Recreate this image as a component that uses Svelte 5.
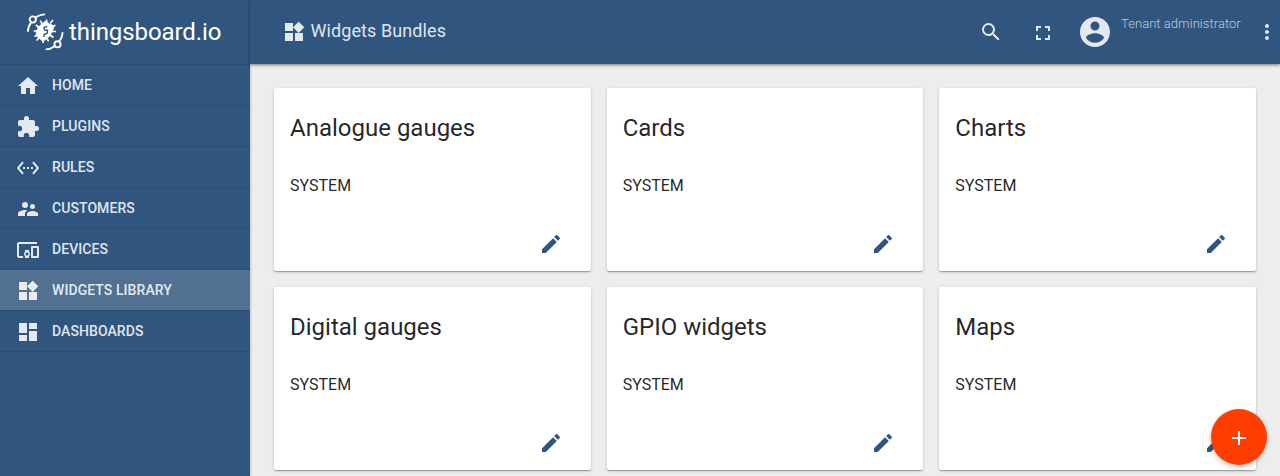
<script>
  const icons = {
    home: 'M10 20v-6h4v6h5v-8h3L12 3 2 12h3v8z',
    extension: 'M20.5 11H19V7c0-1.1-.9-2-2-2h-4V3.500a2.500 2.500 0 0 0-5 0V5H4c-1.100 0-1.990.9-1.990 2v3.800H3.500c1.490 0 2.700 1.210 2.700 2.700s-1.210 2.700-2.700 2.700H2V20c0 1.100.9 2 2 2h3.800v-1.500c0-1.490 1.210-2.700 2.700-2.700s2.700 1.210 2.700 2.700V22H17c1.100 0 2-.9 2-2v-4h1.500a2.500 2.500 0 0 0 0-5z',
    rules: 'M7.770 6.760L6.230 5.480.820 12l5.410 6.520 1.540-1.280L3.420 12l4.350-5.240zM7 13h2v-2H7v2zm10-2h-2v2h2v-2zm-6 2h2v-2h-2v2zm6.770-7.520l-1.540 1.280L20.580 12l-4.350 5.240 1.540 1.280L23.180 12l-5.410-6.520z',
    people: 'M16.500 12a2.500 2.500 0 1 0 0-5 2.500 2.500 0 0 0 0 5zM9 11a3 3 0 1 0 0-6 3 3 0 0 0 0 6zm7.500 3c-1.830 0-5.500.92-5.500 2.750V19h11v-2.250c0-1.830-3.670-2.750-5.500-2.750zM9 13c-2.330 0-7 1.170-7 3.500V19h7v-2.250c0-.85.33-2.340 2.370-3.470C10.500 13.100 9.660 13 9 13z',
    devices: 'M3 6h18V4H3c-1.100 0-2 .9-2 2v12c0 1.100.9 2 2 2h4v-2H3V6zm10 6H9v1.780c-.61.55-1 1.330-1 2.220s.39 1.670 1 2.220V20h4v-1.780c.61-.55 1-1.340 1-2.220s-.39-1.670-1-2.220V12zm-2 5.500a1.500 1.500 0 1 1 0-3 1.500 1.500 0 0 1 0 3zM22 8h-6c-.5 0-1 .5-1 1v10c0 .5.5 1 1 1h6c.5 0 1-.5 1-1V9c0-.5-.5-1-1-1zm-1 10h-4v-8h4v8z',
    widgets: 'M13 13v8h8v-8h-8zM3 21h8v-8H3v8zM3 3v8h8V3H3zm13.660-1.310L11 7.340 16.660 13l5.660-5.660-5.660-5.650z',
    dashboard: 'M3 13h8V3H3v10zm0 8h8v-6H3v6zm10 0h8V11h-8v10zm0-18v6h8V3h-8z',
    search: 'M15.500 14h-.79l-.28-.27A6.471 6.471 0 0 0 16 9.500 6.500 6.500 0 1 0 9.500 16c1.610 0 3.090-.59 4.230-1.570l.27.28v.79l5 4.990L20.490 19l-4.990-5zm-6 0C7.010 14 5 11.990 5 9.500S7.010 5 9.500 5 14 7.010 14 9.500 11.990 14 9.500 14z',
    fullscreen: 'M7 14H5v5h5v-2H7v-3zm-2-4h2V7h3V5H5v5zm12 7h-3v2h5v-5h-2v3zM14 5v2h3v3h2V5h-5z',
    account: 'M12 2C6.480 2 2 6.480 2 12s4.480 10 10 10 10-4.480 10-10S17.520 2 12 2zm0 3c1.660 0 3 1.340 3 3s-1.340 3-3 3-3-1.340-3-3 1.340-3 3-3zm0 14.200c-2.500 0-4.710-1.280-6-3.220.03-1.990 4-3.080 6-3.080 1.990 0 5.970 1.090 6 3.080-1.290 1.940-3.500 3.220-6 3.220z',
    more: 'M12 8c1.100 0 2-.9 2-2s-.9-2-2-2-2 .9-2 2 .9 2 2 2zm0 2c-1.100 0-2 .9-2 2s.9 2 2 2 2-.9 2-2-.9-2-2-2zm0 6c-1.100 0-2 .9-2 2s.9 2 2 2 2-.9 2-2-.9-2-2-2z',
    edit: 'M3 17.250V21h3.750L17.810 9.940l-3.750-3.750L3 17.250zM20.710 7.040a.996.996 0 0 0 0-1.410l-2.340-2.340a.996.996 0 0 0-1.410 0l-1.830 1.830 3.750 3.750 1.830-1.830z',
    add: 'M19 13h-6v6h-2v-6H5v-2h6V5h2v6h6v2z'
  };

  const menu = [
    { label: 'Home', icon: 'home' },
    { label: 'Plugins', icon: 'extension' },
    { label: 'Rules', icon: 'rules' },
    { label: 'Customers', icon: 'people' },
    { label: 'Devices', icon: 'devices' },
    { label: 'Widgets Library', icon: 'widgets', active: true },
    { label: 'Dashboards', icon: 'dashboard' }
  ];

  const bundles = ['Analogue gauges', 'Cards', 'Charts', 'Digital gauges', 'GPIO widgets', 'Maps'];
</script>

{#snippet icon(name, size = 24)}
  <svg class="icon" width={size} height={size} viewBox="0 0 24 24"><path d={icons[name]} /></svg>
{/snippet}

<div class="app">
  <aside>
    <div class="brand">
      <svg class="logo" width="40" height="40" viewBox="0 0 40 40">
        <g fill="none" stroke="#fff" stroke-width="1.900">
          <circle cx="7.800" cy="7.500" r="3.100" />
          <circle cx="32.500" cy="32.300" r="3.100" />
          <path d="M6.300 10.300C4 13 3 16 2.800 19.700M10.600 5.600C13.500 3.300 16.500 2.500 20 2.400" />
          <path d="M33.900 29.400C36.300 27 37.500 24 37.500 20.300M29.600 34.200C26.500 36.500 24 37.400 20.700 37.400" />
          <path stroke-width="1.600" d="M17 12L15.300 8.500M21.500 10.500V7.500M25 11.500L28 8M27 15L30.500 13.300M27 19.500H31M25 23L28.500 25.500M22 26L23.500 29.500M18 27V31M15 25L11.500 28.500M13 22.500L9.500 24.500M12.500 19H8.700M14 15.500L10.800 13" />
        </g>
        <path fill="#fff" stroke="#fff" stroke-width="0.800" stroke-linejoin="round" d="M21.300 9L24.500 12.200 28 13.200 28.700 15.500 27.300 19.200 25 23.500 21 27.500 17.500 29 14.500 26.500 11.700 24.300 11.200 20 13.200 15.500 17.300 11.200z" />
        <path fill="none" stroke="#305680" stroke-width="1.400" d="M22.300 14.300L19 15.500 19.500 18 22.500 18.200 22.200 21.300 19 22.500 19 25" />
      </svg>
      <span>thingsboard.io</span>
    </div>
    <nav>
      {#each menu as item}
        <div class="item" class:active={item.active}>
          {@render icon(item.icon)}
          <span>{item.label}</span>
        </div>
      {/each}
    </nav>
  </aside>

  <section>
    <header>
      {@render icon('widgets')}
      <h1>Widgets Bundles</h1>
      <div class="tools">
        <span class="search">{@render icon('search')}</span>
        <span class="full">{@render icon('fullscreen')}</span>
        <span class="avatar">{@render icon('account', 36)}</span>
        <span class="user">Tenant administrator</span>
        <span class="more">{@render icon('more')}</span>
      </div>
    </header>
    <main>
      {#each bundles as name}
        <article>
          <h2>{name}</h2>
          <p>SYSTEM</p>
          <footer>{@render icon('edit')}</footer>
        </article>
      {/each}
    </main>
  </section>

  <button class="fab" aria-label="Add">{@render icon('add')}</button>
</div>

<style>
  :global(body) { margin: 0; overflow: hidden; }
  .app {
    display: flex;
    position: relative;
    width: 1280px;
    height: 476px;
    overflow: hidden;
    background: #ededed;
    color: rgba(0, 0, 0, 0.87);
    font-family: Roboto, sans-serif;
  }
  .icon { display: block; flex: none; fill: currentColor; }
  aside {
    width: 250px;
    flex: none;
    background: #305680;
    color: rgba(255, 255, 255, 0.87);
    box-shadow: 0 1px 3px rgba(0, 0, 0, 0.3);
  }
  .brand { display: flex; height: 64px; box-sizing: border-box; padding: 12px 0 0 25px; color: #fff; }
  .brand span { margin: 5px 0 0 4px; font-size: 24px; line-height: 30px; letter-spacing: -0.080px; }
  .logo { flex: none; }
  nav { border-bottom: 1px solid #2a4c71; }
  .item {
    display: flex;
    align-items: center;
    height: 41px;
    box-sizing: border-box;
    padding: 2px 16px 0;
    border-top: 1px solid #2a4c71;
    text-transform: uppercase;
    font-size: 14px;
    font-weight: 500;
    letter-spacing: 0.070px;
  }
  .item span { margin: -2px 0 0 12px; }
  .active { background: #517092; }
  section { flex: 1; min-width: 0; }
  header {
    display: flex;
    height: 64px;
    box-sizing: border-box;
    padding: 20px 0 0 32px;
    background: #305680;
    color: rgba(255, 255, 255, 0.87);
    box-shadow: 0 1px 3px rgba(0, 0, 0, 0.5);
  }
  h1 { margin: 0 0 0 4.500px; font-size: 18px; font-weight: 400; line-height: 22px; letter-spacing: 0.090px; }
  .tools { display: flex; margin-left: auto; margin-top: -20px; padding-right: 1px; }
  .search { margin: 20px 28px 0 0; }
  .full { margin: 21px 22px 0 0; }
  .avatar { margin-top: 14px; }
  .user {
    width: 134px;
    margin: 16px 0 0 8px;
    font-size: 13px;
    font-weight: 300;
    line-height: 16px;
    letter-spacing: 0.050px;
    white-space: nowrap;
    color: rgba(255, 255, 255, 0.7);
  }
  .more { margin-top: 20px; }
  main { display: grid; grid-template-columns: repeat(3, 1fr); grid-auto-rows: 183px; gap: 16px; padding: 24px; }
  article {
    display: flex;
    flex-direction: column;
    box-sizing: border-box;
    padding: 24px 16px 15px;
    background: #fff;
    border-radius: 2px;
    box-shadow: 0 1px 3px 0 rgba(0, 0, 0, 0.2), 0 1px 1px 0 rgba(0, 0, 0, 0.14), 0 2px 1px -1px rgba(0, 0, 0, 0.12);
  }
  h2 { margin: 0; font-size: 24px; font-weight: 400; line-height: 32px; }
  p { margin: 31px 0 0; font-size: 16px; line-height: 21px; }
  footer { display: flex; justify-content: flex-end; margin-top: auto; padding-right: 12px; color: #305680; }
  .fab {
    position: absolute;
    right: 13px;
    bottom: 11px;
    display: grid;
    place-items: center;
    width: 56px;
    height: 56px;
    padding: 2px 0 0;
    border: 0;
    border-radius: 50%;
    background: #ff3d00;
    color: #fff;
    box-shadow: 0 2px 5px rgba(0, 0, 0, 0.26);
  }
</style>
